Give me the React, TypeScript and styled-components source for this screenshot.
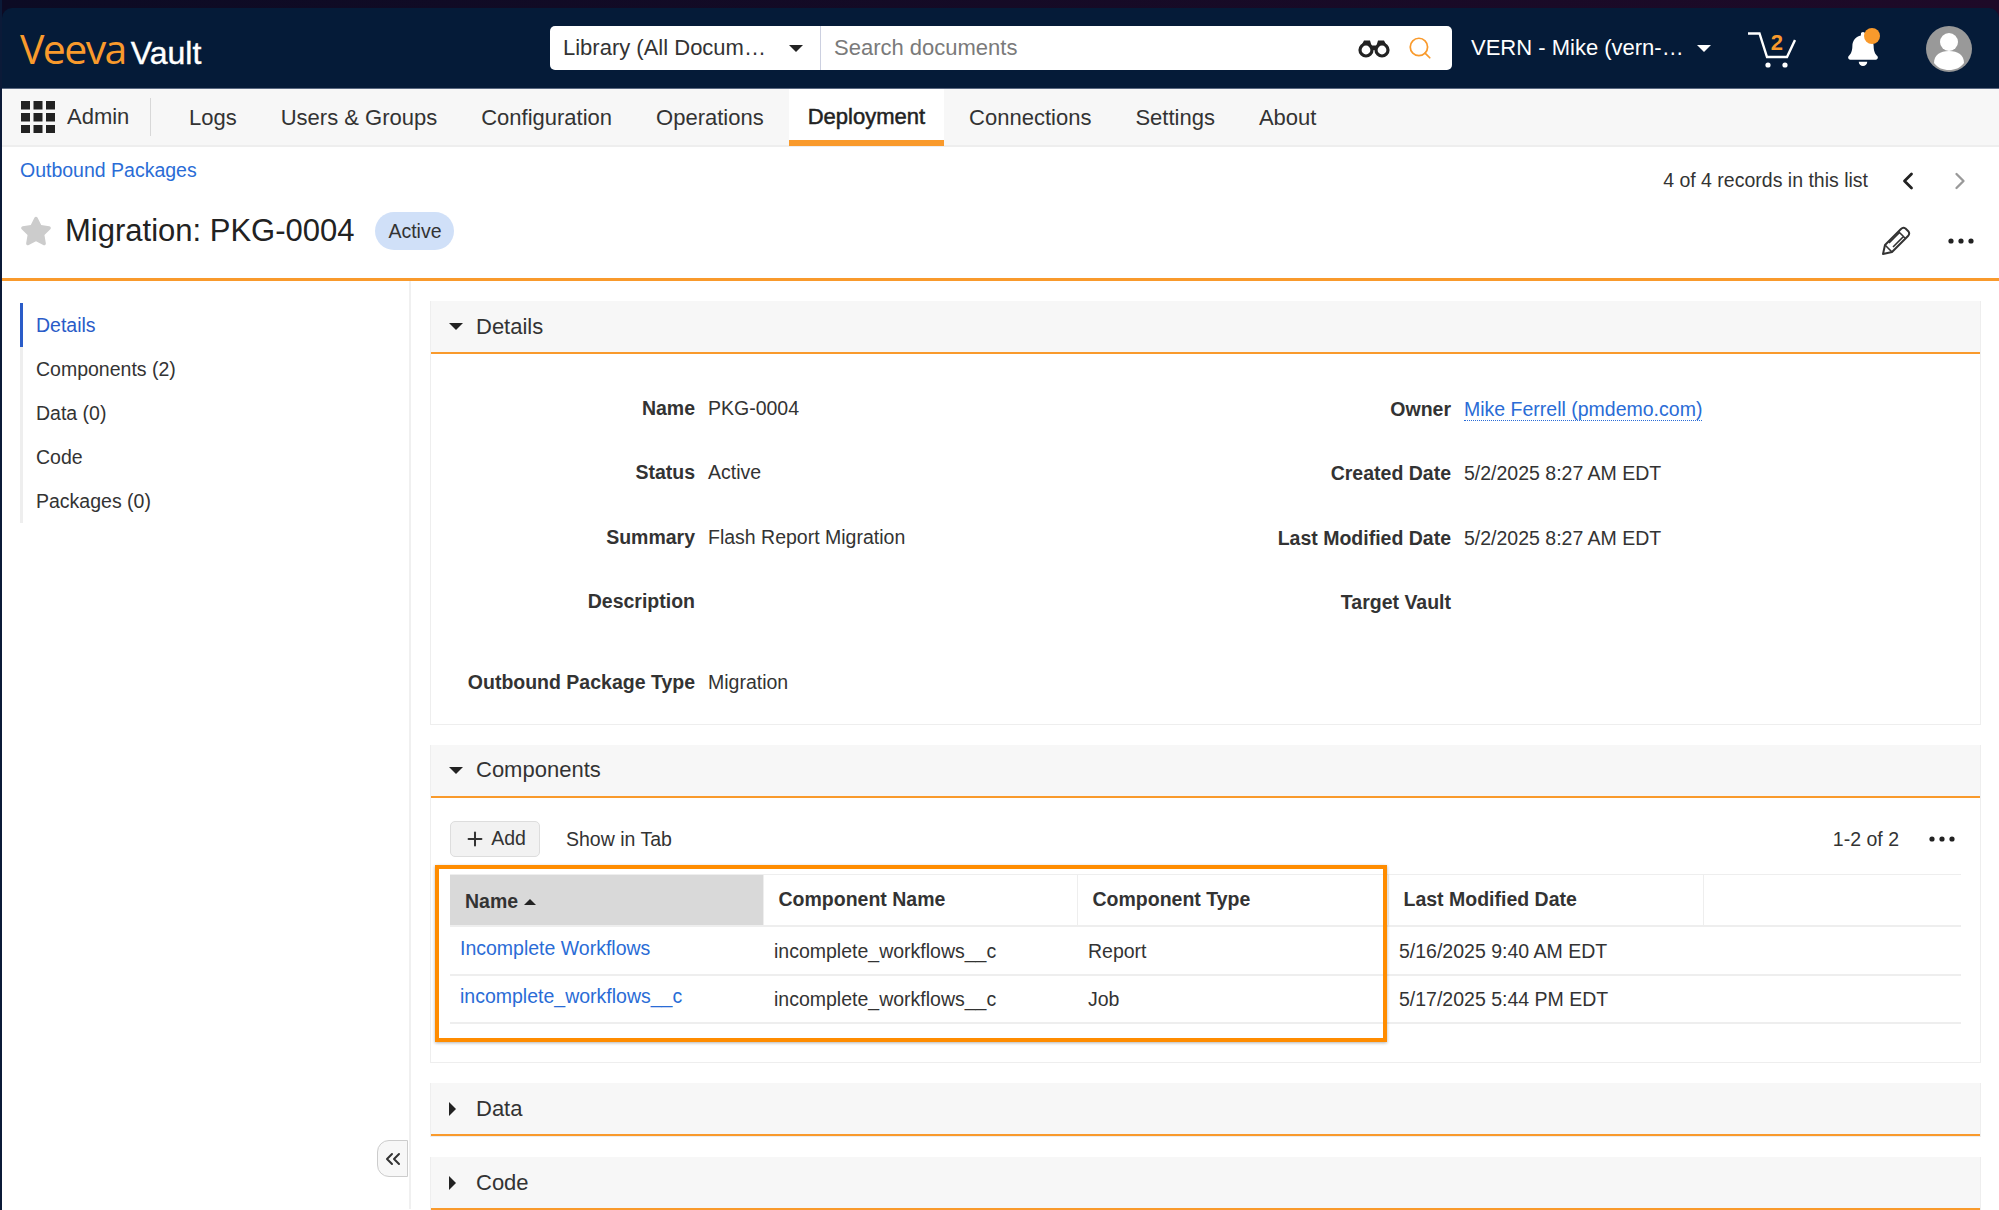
import styled, { createGlobalStyle } from "styled-components";
import { ChevronLeft, ChevronRight, ChevronsLeft, Plus, Search } from "lucide-react";
import { FaBell, FaStar } from "react-icons/fa";

const orange = "#f99a2c";

const GlobalStyle = createGlobalStyle`
  html, body {
    margin: 0;
    padding: 0;
    height: 1210px;
    overflow: hidden;
    background: #ffffff;
    font-family: "Liberation Sans", Arial, sans-serif;
    color: #333333;
  }
  * { box-sizing: border-box; }
`;

const Page = styled.div`
  width: 1999px;
  height: 1210px;
  overflow: hidden;
  border-left: 2px solid #0b1a38;
  background: #ffffff;
`;

const TopStrip = styled.div`
  height: 8px;
  margin-left: -2px;
  background: linear-gradient(90deg, #0c0b24, #1e0a28);
`;

const Frame = styled.div`
  background: linear-gradient(90deg, #0c0b24, #1e0a28);
`;

const Header = styled.header`
  height: 81px;
  display: flex;
  align-items: flex-start;
  background: #051b38;
  border-radius: 10px 10px 0 0;
  border-bottom: 1px solid #5a6880;
`;

const Logo = styled.div`
  flex: 0 0 548px;
  padding: 18px 0 0 18px;
  display: flex;
  align-items: baseline;
  gap: 5px;
`;

const LogoMark = styled.span`
  font-family: "Open Sans", sans-serif;
  font-size: 41px;
  line-height: 44px;
  letter-spacing: -1.6px;
  color: ${orange};
`;

const LogoName = styled.span`
  font-size: 32px;
  line-height: 44px;
  color: #ffffff;
  -webkit-text-stroke: 0.4px #ffffff;
`;

const SearchBox = styled.div`
  width: 902px;
  height: 44px;
  margin-top: 18px;
  display: flex;
  align-items: center;
  background: #ffffff;
  border-radius: 5px;
  font-size: 22px;
`;

const ScopeSelect = styled.div`
  flex: 0 0 271px;
  height: 100%;
  padding: 0 17px 0 13px;
  display: flex;
  align-items: center;
  justify-content: space-between;
  border-right: 1px solid #ccd0e0;
  white-space: nowrap;
`;

const Placeholder = styled.div`
  flex: 1;
  padding-left: 13px;
  color: #7a7a7a;
`;

const SearchIcons = styled.div`
  display: flex;
  align-items: center;
  gap: 17px;
  padding-right: 19px;
`;

const Caret = styled.span<{ $dir?: "down" | "up" | "right"; $color?: string; $size?: number }>`
  display: inline-block;
  width: 0;
  height: 0;
  flex: none;
  border-style: solid;
  border-color: transparent;
  ${({ $dir = "down", $color = "#222222", $size = 7 }) =>
    $dir === "down"
      ? `border-width: ${$size}px ${$size}px 0 ${$size}px; border-top-color: ${$color};`
      : $dir === "up"
      ? `border-width: 0 ${$size}px ${$size}px ${$size}px; border-bottom-color: ${$color};`
      : `border-width: ${$size}px 0 ${$size}px ${$size}px; border-left-color: ${$color};`}
`;

const VaultSwitch = styled.div`
  flex: 0 0 238px;
  height: 44px;
  margin: 18px 0 0 19px;
  display: flex;
  align-items: center;
  gap: 13px;
  font-size: 22px;
  color: #ffffff;
  white-space: nowrap;
`;

const CartButton = styled.div`
  position: relative;
  width: 48px;
  height: 38px;
  margin: 24px 0 0 37px;
`;

const CartCount = styled.span`
  position: absolute;
  left: 23px;
  top: 0;
  font-size: 22px;
  line-height: 22px;
  font-weight: 700;
  color: ${orange};
`;

const BellButton = styled.div`
  position: relative;
  width: 32px;
  height: 36px;
  margin: 24px 0 0 50px;
  color: #ffffff;
`;

const BellDot = styled.span`
  position: absolute;
  left: 18px;
  top: -4px;
  width: 16px;
  height: 16px;
  border-radius: 50%;
  background: ${orange};
`;

const Avatar = styled.svg`
  width: 46px;
  height: 46px;
  margin: 18px 0 0 48px;
`;

const NavBar = styled.nav`
  height: 58px;
  display: flex;
  align-items: stretch;
  background: #f7f7f7;
  border-bottom: 2px solid #eeeeee;
  font-size: 22px;
`;

const AppMenu = styled.div`
  flex: 0 0 148px;
  display: flex;
  align-items: center;
  gap: 12px;
  padding-left: 19px;
  color: #333333;
`;

const NavDivider = styled.div`
  width: 1px;
  height: 38px;
  margin: 9px 16px 0 0;
  background: #d8d8d8;
`;

const NavTab = styled.div<{ $active?: boolean }>`
  margin: 0 3px;
  padding: 0 19px;
  display: flex;
  align-items: center;
  white-space: nowrap;
  margin-bottom: -1px;
  ${({ $active }) =>
    $active
      ? `background: #ffffff;
         border-bottom: 6px solid ${orange};
         color: #222222;
         padding-top: 5px;
         -webkit-text-stroke: 0.5px #222222;`
      : ""}
`;

const PageHeader = styled.section`
  height: 134px;
  display: flex;
  justify-content: space-between;
  padding: 0 25px 0 18px;
  border-bottom: 3px solid ${orange};
`;

const HeaderColumn = styled.div<{ $right?: boolean }>`
  display: flex;
  flex-direction: column;
  align-items: ${({ $right }) => ($right ? "flex-end" : "flex-start")};
`;

const Crumb = styled.a`
  margin-top: 12px;
  font-size: 19.5px;
  line-height: 23px;
  color: #2a6cd6;
`;

const TitleRow = styled.div`
  margin-top: 28px;
  height: 42px;
  display: flex;
  align-items: center;
  color: #cccccc;
`;

const Title = styled.h1`
  margin: 0 21px 0 13px;
  font-size: 31px;
  font-weight: 400;
  color: #222222;
  white-space: nowrap;
`;

const StatusPill = styled.span`
  width: 79px;
  height: 38px;
  display: flex;
  align-items: center;
  justify-content: center;
  border-radius: 19px;
  background: #d0e0f8;
  font-size: 19.5px;
  color: #333333;
`;

const Pager = styled.div`
  margin-top: 22px;
  height: 23px;
  display: flex;
  align-items: center;
  font-size: 19.5px;
  color: #333333;
`;

const PagerArrow = styled.span<{ $off?: boolean }>`
  display: flex;
  margin-left: ${({ $off }) => ($off ? "24px" : "26px")};
  color: ${({ $off }) => ($off ? "#999999" : "#222222")};
`;

const RecordActions = styled.div`
  margin-top: 34px;
  display: flex;
  align-items: center;
  gap: 37px;
`;

const MoreDots = styled.svg`
  width: 26px;
  height: 6px;
  display: block;
`;

const Body = styled.div`
  display: flex;
  height: 928px;
`;

const Sidebar = styled.aside`
  position: relative;
  flex: 0 0 409px;
  padding: 22px 0 0 18px;
  border-right: 2px solid #f0f0f0;
`;

const SideItem = styled.div<{ $active?: boolean }>`
  height: 44px;
  padding-left: 13px;
  display: flex;
  align-items: center;
  font-size: 19.5px;
  border-left: 3px solid ${({ $active }) => ($active ? "#2a5cc8" : "#eeeeee")};
  color: ${({ $active }) => ($active ? "#2a5cc8" : "#333333")};
`;

const CollapseButton = styled.button`
  position: absolute;
  right: 1px;
  bottom: 32px;
  width: 31px;
  height: 37px;
  padding: 0;
  display: flex;
  align-items: center;
  justify-content: center;
  background: #f7f7f7;
  border: 1px solid #cccccc;
  border-radius: 12px 0 0 12px;
  color: #333333;
`;

const Main = styled.main`
  flex: 1;
  padding: 20px 18px 0 19px;
  display: flex;
  flex-direction: column;
  gap: 20px;
`;

const Panel = styled.section`
  border: 1px solid #eeeeee;
  border-top: 0;
`;

const PanelHeader = styled.div`
  height: 53px;
  padding-left: 18px;
  display: flex;
  align-items: center;
  background: #f7f7f7;
  border-bottom: 2px solid ${orange};
  font-size: 22px;
  color: #333333;
`;

const PanelCaret = styled.span`
  flex: 0 0 27px;
  display: flex;
  align-items: center;
`;

const FormGrid = styled.div`
  display: grid;
  grid-template-columns: 775px 1fr;
  padding-bottom: 9px;
`;

const FieldColumn = styled.div<{ $top: number }>`
  padding-top: ${({ $top }) => $top}px;
`;

const Field = styled.div<{ $labelWidth: number; $gapAbove?: number }>`
  height: 64.5px;
  margin-top: ${({ $gapAbove = 0 }) => $gapAbove}px;
  display: grid;
  grid-template-columns: ${({ $labelWidth }) => $labelWidth}px 1fr;
  column-gap: 13px;
  align-items: center;
  font-size: 19.5px;
`;

const FieldLabel = styled.span`
  text-align: right;
  font-weight: 700;
  color: #333333;
`;

const FieldLink = styled.a`
  color: #2a6cd6;
  border-bottom: 1px dotted #2a6cd6;
`;

const Toolbar = styled.div`
  height: 76px;
  padding: 23px 25px 0 19px;
  display: flex;
  align-items: flex-start;
  font-size: 19.5px;
`;

const AddButton = styled.button`
  width: 90px;
  height: 36px;
  padding: 0;
  display: flex;
  align-items: center;
  justify-content: center;
  gap: 5px;
  background: #f2f2f2;
  border: 1px solid #dddddd;
  border-radius: 5px;
  font: inherit;
  color: #333333;
`;

const ToolbarLabel = styled.span`
  margin-left: 26px;
  line-height: 36px;
  flex: 1;
`;

const ToolbarCount = styled.span`
  line-height: 36px;
  margin-right: 30px;
`;

const TableArea = styled.div`
  position: relative;
  margin: 0 19px;
  padding-bottom: 38px;
`;

const Highlight = styled.div`
  position: absolute;
  left: -15px;
  top: -9px;
  width: 952px;
  height: 177px;
  border: 4px solid #ff8c00;
  box-shadow: 0 1px 3px rgba(0, 0, 0, 0.3);
  pointer-events: none;
`;

const Table = styled.table`
  width: 100%;
  table-layout: fixed;
  border-collapse: collapse;
  font-size: 19.5px;
`;

const HeadCell = styled.th<{ $sorted?: boolean; $width?: number }>`
  width: ${({ $width }) => ($width ? `${$width}px` : "auto")};
  height: 52px;
  padding: 0 0 0 15px;
  text-align: left;
  font-weight: 700;
  color: #333333;
  background: ${({ $sorted }) => ($sorted ? "#d9d9d9" : "#ffffff")};
  border-top: 1px solid #eeeeee;
  border-bottom: 2px solid #eeeeee;
  border-right: 1px solid #eeeeee;
  &:last-child { border-right: 0; }
`;

const SortMark = styled.span`
  display: inline-block;
  margin-left: 6px;
  vertical-align: 3px;
`;

const Row = styled.tr`
  height: 48.5px;
  border-bottom: 2px solid #eeeeee;
`;

const Cell = styled.td`
  padding: 2px 0 0 11px;
  color: #333333;
`;

const LinkCell = styled.td`
  padding: 0 0 4px 10px;
  color: #2a6cd6;
`;

const GridIcon = () => (
  <svg width="34" height="32" viewBox="0 0 34 32" fill="#222222">
    {[0, 12, 24].map((y) =>
      [0, 12.5, 25].map((x) => <rect key={`${x}-${y}`} x={x} y={y} width="9" height="8.5" />)
    )}
  </svg>
);

const Binoculars = () => (
  <svg width="32" height="20" viewBox="0 0 32 20">
    <path d="M6 2.5h6l1.5 5h5L20 2.5h6L31 12H1z" fill="#222222" />
    <circle cx="8" cy="12" r="6" fill="#ffffff" stroke="#222222" strokeWidth="3.2" />
    <circle cx="24" cy="12" r="6" fill="#ffffff" stroke="#222222" strokeWidth="3.2" />
    <rect x="13" y="8" width="6" height="4" fill="#222222" />
  </svg>
);

const CartIcon = () => (
  <svg width="48" height="38" viewBox="0 0 48 38" fill="none" stroke="#ffffff" strokeWidth="2.4">
    <path d="M0 1.5h11.5L19 25h20l8-17" />
    <circle cx="20" cy="33" r="2.6" fill="#ffffff" stroke="none" />
    <circle cx="37" cy="33" r="2.6" fill="#ffffff" stroke="none" />
  </svg>
);

const PencilIcon = () => (
  <svg width="30" height="30" viewBox="0 0 30 30" fill="none" stroke="#333333" strokeWidth="2" strokeLinejoin="round">
    <path d="M2 28l2-9L20 3c1.500-1.500 3-1.500 4.500-.5l3 3c1 1.500 1 3-.5 4.500L11 26z" />
    <path d="M4 19l7 7M17.500 5.500l7 7M8 17l11-11M12 21l11-11" strokeWidth="1.600" />
  </svg>
);

const Dots = () => (
  <MoreDots viewBox="0 0 26 6" fill="#222222">
    <circle cx="3" cy="3" r="2.600" />
    <circle cx="13" cy="3" r="2.600" />
    <circle cx="23" cy="3" r="2.600" />
  </MoreDots>
);

const navTabs = ["Logs", "Users & Groups", "Configuration", "Operations", "Deployment", "Connections", "Settings", "About"];
const sideItems = ["Details", "Components (2)", "Data (0)", "Code", "Packages (0)"];

const componentRows = [
  ["Incomplete Workflows", "incomplete_workflows__c", "Report", "5/16/2025 9:40 AM EDT"],
  ["incomplete_workflows__c", "incomplete_workflows__c", "Job", "5/17/2025 5:44 PM EDT"],
];

function App() {
  return (
    <Page>
      <GlobalStyle />
      <TopStrip />
      <Frame>
        <Header>
          <Logo>
            <LogoMark>Veeva</LogoMark>
            <LogoName>Vault</LogoName>
          </Logo>
          <SearchBox>
            <ScopeSelect>
              Library (All Docum…
              <Caret />
            </ScopeSelect>
            <Placeholder>Search documents</Placeholder>
            <SearchIcons>
              <Binoculars />
              <Search size={26} color={orange} strokeWidth={1.6} />
            </SearchIcons>
          </SearchBox>
          <VaultSwitch>
            VERN - Mike (vern-…
            <Caret $color="#ffffff" />
          </VaultSwitch>
          <CartButton>
            <CartIcon />
            <CartCount>2</CartCount>
          </CartButton>
          <BellButton>
            <FaBell size={34} />
            <BellDot />
          </BellButton>
          <Avatar viewBox="0 0 46 46">
            <circle cx="23" cy="23" r="23" fill="#999999" />
            <circle cx="23" cy="16" r="9" fill="#ffffff" />
            <path d="M8 37c0-8 6-12 15-12s15 4 15 12c-4 5-9 7-15 7s-11-2-15-7z" fill="#ffffff" />
          </Avatar>
        </Header>
      </Frame>

      <NavBar>
        <AppMenu>
          <GridIcon />
          Admin
        </AppMenu>
        <NavDivider />
        {navTabs.map((tab) => (
          <NavTab key={tab} $active={tab === "Deployment"}>
            {tab}
          </NavTab>
        ))}
      </NavBar>

      <PageHeader>
        <HeaderColumn>
          <Crumb>Outbound Packages</Crumb>
          <TitleRow>
            <FaStar size={32} />
            <Title>Migration: PKG-0004</Title>
            <StatusPill>Active</StatusPill>
          </TitleRow>
        </HeaderColumn>
        <HeaderColumn $right>
          <Pager>
            4 of 4 records in this list
            <PagerArrow>
              <ChevronLeft size={28} strokeWidth={2.4} />
            </PagerArrow>
            <PagerArrow $off>
              <ChevronRight size={28} strokeWidth={2} />
            </PagerArrow>
          </Pager>
          <RecordActions>
            <PencilIcon />
            <Dots />
          </RecordActions>
        </HeaderColumn>
      </PageHeader>

      <Body>
        <Sidebar>
          {sideItems.map((item, i) => (
            <SideItem key={item} $active={i === 0}>
              {item}
            </SideItem>
          ))}
          <CollapseButton>
            <ChevronsLeft size={24} strokeWidth={2} />
          </CollapseButton>
        </Sidebar>

        <Main>
          <Panel>
            <PanelHeader>
              <PanelCaret>
                <Caret $size={7} />
              </PanelCaret>
              Details
            </PanelHeader>
            <FormGrid>
              <FieldColumn $top={22}>
                <Field $labelWidth={264}>
                  <FieldLabel>Name</FieldLabel>
                  <span>PKG-0004</span>
                </Field>
                <Field $labelWidth={264}>
                  <FieldLabel>Status</FieldLabel>
                  <span>Active</span>
                </Field>
                <Field $labelWidth={264}>
                  <FieldLabel>Summary</FieldLabel>
                  <span>Flash Report Migration</span>
                </Field>
                <Field $labelWidth={264}>
                  <FieldLabel>Description</FieldLabel>
                  <span />
                </Field>
                <Field $labelWidth={264} $gapAbove={16}>
                  <FieldLabel>Outbound Package Type</FieldLabel>
                  <span>Migration</span>
                </Field>
              </FieldColumn>
              <FieldColumn $top={23}>
                <Field $labelWidth={245}>
                  <FieldLabel>Owner</FieldLabel>
                  <span>
                    <FieldLink>Mike Ferrell (pmdemo.com)</FieldLink>
                  </span>
                </Field>
                <Field $labelWidth={245}>
                  <FieldLabel>Created Date</FieldLabel>
                  <span>5/2/2025 8:27 AM EDT</span>
                </Field>
                <Field $labelWidth={245}>
                  <FieldLabel>Last Modified Date</FieldLabel>
                  <span>5/2/2025 8:27 AM EDT</span>
                </Field>
                <Field $labelWidth={245}>
                  <FieldLabel>Target Vault</FieldLabel>
                  <span />
                </Field>
              </FieldColumn>
            </FormGrid>
          </Panel>

          <Panel>
            <PanelHeader>
              <PanelCaret>
                <Caret $size={7} />
              </PanelCaret>
              Components
            </PanelHeader>
            <Toolbar>
              <AddButton>
                <Plus size={22} strokeWidth={2.2} />
                Add
              </AddButton>
              <ToolbarLabel>Show in Tab</ToolbarLabel>
              <ToolbarCount>1-2 of 2</ToolbarCount>
              <span style={{ marginTop: 15 }}>
                <Dots />
              </span>
            </Toolbar>
            <TableArea>
              <Table>
                <thead>
                  <tr>
                    <HeadCell $sorted $width={313}>
                      Name
                      <SortMark>
                        <Caret $dir="up" $size={6} />
                      </SortMark>
                    </HeadCell>
                    <HeadCell $width={314}>Component Name</HeadCell>
                    <HeadCell $width={311}>Component Type</HeadCell>
                    <HeadCell $width={315}>Last Modified Date</HeadCell>
                    <HeadCell />
                  </tr>
                </thead>
                <tbody>
                  {componentRows.map((row) => (
                    <Row key={row[0]}>
                      <LinkCell>{row[0]}</LinkCell>
                      <Cell>{row[1]}</Cell>
                      <Cell>{row[2]}</Cell>
                      <Cell>{row[3]}</Cell>
                      <Cell />
                    </Row>
                  ))}
                </tbody>
              </Table>
              <Highlight />
            </TableArea>
          </Panel>

          <Panel>
            <PanelHeader>
              <PanelCaret>
                <Caret $dir="right" $size={7} />
              </PanelCaret>
              Data
            </PanelHeader>
          </Panel>

          <Panel>
            <PanelHeader>
              <PanelCaret>
                <Caret $dir="right" $size={7} />
              </PanelCaret>
              Code
            </PanelHeader>
          </Panel>
        </Main>
      </Body>
    </Page>
  );
}

export default App;
